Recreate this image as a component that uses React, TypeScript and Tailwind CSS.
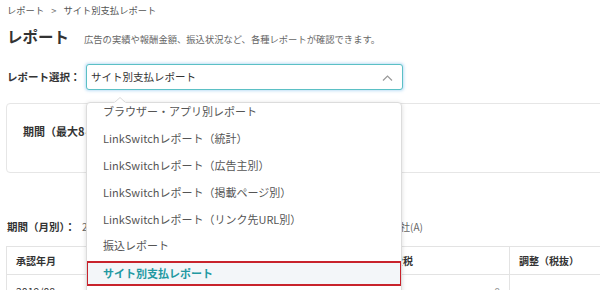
import React from "react";

const items = [
  "ブラウザー・アプリ別レポート",
  "LinkSwitchレポート（統計）",
  "LinkSwitchレポート（広告主別）",
  "LinkSwitchレポート（掲載ページ別）",
  "LinkSwitchレポート（リンク先URL別）",
  "振込レポート",
];

export default function App() {
  return (
    <div className="relative w-[600px] h-[290px] overflow-hidden bg-white font-['Noto_Sans_CJK_JP',sans-serif] text-[#333]">
      {/* breadcrumb */}
      <div className="h-[22px] flex items-center pl-[7px] text-[9.3px] text-[#555] leading-none">
        <span>レポート</span>
        <span className="ml-[7px] mr-[7px] text-[#777]">&gt;</span>
        <span>サイト別支払レポート</span>
      </div>

      {/* title */}
      <div className="h-[30px] flex items-center pl-[7px]">
        <h1 className="text-[15.5px] font-bold leading-none text-[#333]">レポート</h1>
        <p className="ml-[15px] mt-[5px] text-[9.3px] leading-none text-[#666]">
          広告の実績や報酬金額、振込状況など、各種レポートが確認できます。
        </p>
      </div>

      {/* select row */}
      <div className="mt-[12px] h-[26px] flex items-center pl-[7px]">
        <span className="w-[79px] text-[10.5px] font-bold leading-none text-[#333]">レポート選択：</span>
        <div className="relative w-[317px] h-[26px] flex items-center pl-[4px] border border-[#5bc0c5] rounded-[3px] shadow-[0_0_3px_1px_rgba(110,185,235,0.45)] bg-white">
          <span className="text-[10.5px] leading-none text-[#333]">サイト別支払レポート</span>
          <svg className="absolute right-[9px] top-[10px]" width="11" height="6" viewBox="0 0 11 6" fill="none">
            <polyline points="1,5.5 5.5,1 10,5.5" stroke="#9a9a9a" strokeWidth="1.2" />
          </svg>
        </div>
      </div>

      {/* card */}
      <div className="mt-[13px] ml-[6px] w-[640px] h-[70px] border border-[#e6e6e6] rounded-[4px] pl-[16px] pt-[20px] text-[11px] leading-[14px]">
        <span className="font-bold text-[#333]">期間（最大8ヶ月）：</span>
      </div>

      {/* period line */}
      <div className="mt-[47px] h-[14px] flex items-center pl-[7px] text-[10.5px] leading-none">
        <span className="w-[75px] font-bold text-[#333]">期間（月別）：</span>
        <span className="w-[288px] text-[#666] text-[10px]">2019/08 ～ 2019/08</span>
        <span className="text-[#666] text-[10px]">支払会社(A)</span>
      </div>

      {/* table */}
      <div className="mt-[12px] ml-[6px] w-[640px] border border-[#e3e3e3]">
        <div className="grid grid-cols-[184px_183px_136px_1fr] border-b border-[#e3e3e3]">
          <div className="h-[27px] flex items-center px-[9px] border-r border-[#e3e3e3] text-[10px] font-bold">承認年月</div>
          <div className="h-[27px] flex items-center px-[9px] border-r border-[#e3e3e3] text-[10px] font-bold">確定報酬額</div>
          <div className="h-[27px] flex items-center px-[9px] border-r border-[#e3e3e3] text-[10px] font-bold">消費税</div>
          <div className="h-[27px] flex items-center px-[9px] text-[10px] font-bold">調整（税抜）</div>
        </div>
        <div className="grid grid-cols-[184px_183px_136px_1fr]">
          <div className="h-[34px] flex items-center px-[9px] border-r border-[#e3e3e3] text-[10.5px] text-[#333]">2019/08</div>
          <div className="h-[34px] flex items-center justify-end px-[9px] border-r border-[#e3e3e3] text-[10.5px] text-[#333]">0</div>
          <div className="h-[34px] flex items-center justify-end px-[9px] border-r border-[#e3e3e3] text-[10.5px] text-[#999]">0</div>
          <div className="h-[34px] flex items-center justify-end px-[9px] text-[10.5px] text-[#333]">0</div>
        </div>
      </div>

      {/* dropdown menu */}
      <div className="absolute left-[86px] top-[102px] w-[316px] h-[200px] bg-white border border-[#dcdcdc] rounded-[4px] shadow-[0_1px_5px_rgba(0,0,0,0.14)] overflow-hidden">
        <div className="mt-[-4.5px]">
          {items.map((t) => (
            <div key={t} className="h-[26.8px] flex items-center pl-[16px] text-[11px] leading-none text-[#555]">
              {t}
            </div>
          ))}
          <div className="h-[26.8px] pt-[2px] mx-[-1px]">
            <div className="h-[25px] flex items-center pl-[15px] border-2 border-[#c8232c] bg-[#f3f6f9] text-[11px] font-bold leading-none text-[#2299a2]">
              サイト別支払レポート
            </div>
          </div>
        </div>
      </div>
      <svg className="absolute left-[114px] top-[97px]" width="12" height="6" viewBox="0 0 12 6">
        <polygon points="0,6 6,0.5 12,6" fill="#ffffff" stroke="#d8d8d8" strokeWidth="1" />
        <rect x="0.5" y="5.2" width="11" height="1" fill="#ffffff" />
      </svg>
    </div>
  );
}
